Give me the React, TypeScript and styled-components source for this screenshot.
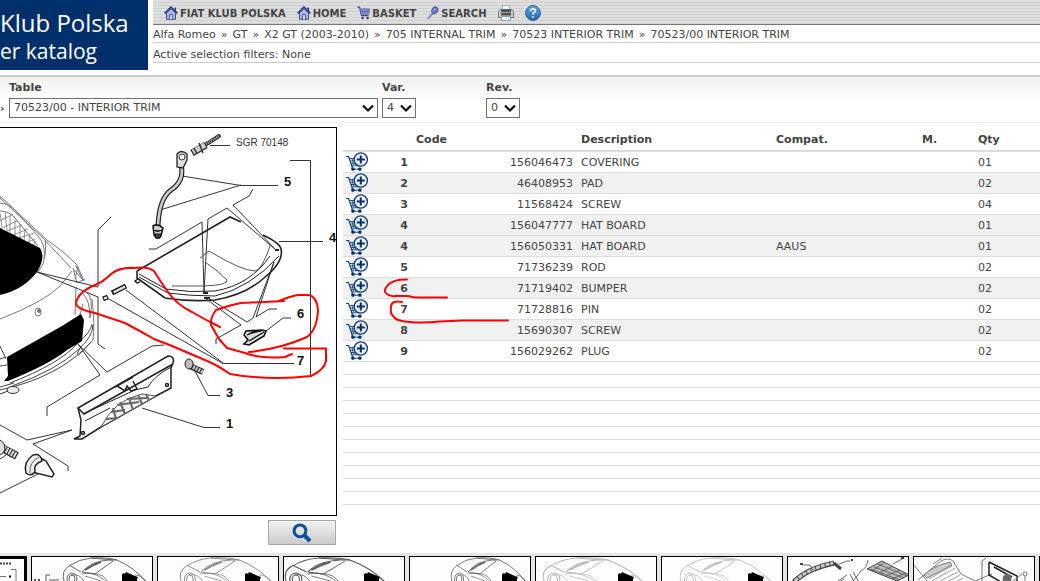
import React from "react";
import styled, { createGlobalStyle } from "styled-components";

const GlobalStyle = createGlobalStyle`
  * { box-sizing: border-box; }
  body {
    margin: 0;
    background: #fff;
    color: #444;
    font: 11px/14px Verdana, "DejaVu Sans", sans-serif;
  }
`;

const Page = styled.div`
  display: flex;
  flex-direction: column;
  height: 100vh;
  overflow: hidden;
`;

const Header = styled.header`
  display: flex;
  gap: 5px;
  flex: none;
  height: 75px;
`;

const Logo = styled.div`
  flex: none;
  width: 148px;
  height: 70px;
  padding-top: 8px;
  overflow: hidden;
  background: #00306b;
  color: #fff;
  font: 24px/29px "Open Sans", "Noto Sans", sans-serif;
  white-space: nowrap;
`;

const LogoSub = styled.div`
  font-size: 21px;
  line-height: 28px;
`;

const HeaderMain = styled.div`
  flex: 1;
  min-width: 0;
`;

const Menu = styled.nav`
  display: flex;
  align-items: center;
  gap: 11px;
  height: 25px;
  padding: 1px 0 0 11px;
  border-bottom: 1px solid #777;
  background: repeating-linear-gradient(#dedede 0 2px, #d0d0d0 2px 3px);
`;

const MenuLink = styled.a`
  display: flex;
  align-items: center;
  gap: 2px;
  color: #444;
  font-size: 10px;
  font-weight: bold;
  text-decoration: none;
  white-space: nowrap;

  svg { flex: none; display: block; }
`;

const MenuText = styled.span`
  padding-top: 2px;
`;

const InfoLine = styled.div<{ $tall?: boolean }>`
  display: flex;
  align-items: center;
  gap: 5px;
  height: ${(p) => (p.$tall ? 20 : 18)}px;
  padding-top: ${(p) => (p.$tall ? 4 : 2)}px;
  border-bottom: 1px solid #ccc;
  white-space: nowrap;
`;

const Crumb = styled.a`
  color: #444;
  text-decoration: none;
`;

const Filters = styled.form`
  display: flex;
  flex: none;
  gap: 4px;
  height: 48px;
  border-top: 2px solid #ccc;
  border-bottom: 1px solid #eee;
  background: linear-gradient(#f0f0f0, #fff 24px);
`;

const Arrow = styled.span`
  width: 5px;
  padding-top: 25px;
  overflow: hidden;
  font-weight: bold;
`;

const Field = styled.label<{ $width: number; $gap?: number }>`
  width: ${(p) => p.$width}px;
  margin-right: ${(p) => p.$gap ?? 0}px;
  padding-top: 4px;
  font-weight: bold;
`;

const SelectWrap = styled.span`
  position: relative;
  display: block;
  margin-top: 3px;

  svg {
    position: absolute;
    right: 4px;
    top: 6px;
    pointer-events: none;
  }
`;

const Select = styled.select`
  display: block;
  width: 100%;
  height: 20px;
  padding: 0 4px;
  border: 1px solid #707070;
  border-radius: 0;
  appearance: none;
  background: #fff;
  color: #444;
  font: 11px/18px Verdana, "DejaVu Sans", sans-serif;
`;

const Content = styled.main`
  display: flex;
  flex: none;
  gap: 6px;
  padding-top: 4px;
`;

const DrawingColumn = styled.section`
  display: flex;
  flex-direction: column;
  align-items: flex-end;
  gap: 4px;
  width: 337px;
  height: 426px;
`;

const DrawingFrame = styled.div`
  width: 100%;
  height: 389px;
  overflow: hidden;
  border: 1px solid #000;
  border-left: 0;

  svg { display: block; }
`;

const ZoomButton = styled.button`
  display: flex;
  align-items: center;
  justify-content: center;
  width: 68px;
  height: 25px;
  margin-right: 1px;
  padding: 0;
  border: 1px solid #aaa;
  background: linear-gradient(#f2f2f2, #cacaca);
`;

const PartsPanel = styled.section`
  position: relative;
  flex: 1;
  min-width: 0;
`;

const PartsTable = styled.table`
  width: 100%;
  border-collapse: separate;
  border-spacing: 0;
  table-layout: fixed;

  th {
    height: 25px;
    padding: 2px 3px 0;
    border-bottom: 2px solid #ddd;
    text-align: left;
  }
  td {
    height: 21px;
    padding: 2px 3px 0;
    border-bottom: 1px solid #ddd;
  }
`;

const PartRow = styled.tr<{ $shaded: boolean }>`
  background: ${(p) => (p.$shaded ? "#f1f1f1" : "#fff")};
`;

const NumberCell = styled.td`
  font-weight: bold;
  text-align: center;
`;

const CodeCell = styled.td`
  && { padding-right: 5px; }
  text-align: right;
`;

const IconCell = styled.td`
  && { padding-top: 0; }
`;

const AddButton = styled.button`
  display: block;
  padding: 0;
  border: 0;
  background: none;

  svg { display: block; }
`;

const Ruled = styled.div`
  height: 143px;
  background: repeating-linear-gradient(#fff 0 12px, #ddd 12px 13px);
`;

const Marks = styled.svg`
  position: absolute;
  left: 40px;
  top: 148px;
  pointer-events: none;
`;

const Strip = styled.footer`
  display: flex;
  flex: 1;
  gap: 4px;
  min-height: 0;
  padding-top: 3px;
  overflow: hidden;
  background: #e6e6e6;
`;

const Thumb = styled.a<{ $current?: boolean }>`
  flex: none;
  width: ${(p) => (p.$current ? 27 : 122)}px;
  height: 84px;
  overflow: hidden;
  border: ${(p) => (p.$current ? 3 : 1)}px solid #000;
  border-left-width: ${(p) => (p.$current ? 0 : 1)}px;
  background: #fcfffc;

  svg { display: block; }
`;

const HomeIcon = () => (
  <svg width="14" height="14" viewBox="0 0 14 14">
    <path d="M2.5 7v6.3h9V7L7 2.6z" fill="#aab8e6" stroke="#3c4f93" />
    <path d="M10.3 1.5h1.8v4h-1.8z" fill="#34488c" />
    <path d="M.7 7.4L7 1.2l6.3 6.2" fill="none" stroke="#2b3f86" strokeWidth="1.8" />
    <path d="M5.6 13V8.6h2.8V13" fill="#eef2ff" stroke="#3c4f93" />
  </svg>
);

const BasketIcon = () => (
  <svg width="13" height="14" viewBox="0 0 13 14">
    <path d="M.3 1.2h2.2L4.6 9.6h7" fill="none" stroke="#3b4a8c" strokeWidth="1.2" />
    <path d="M3 3h9.5l-.8 5H4.2z" fill="#a9b4e0" stroke="#5366ab" />
    <path d="M5.6 3l.5 5M8 3v5m2.3-5l-.4 5M3.500 5.400h8.600" stroke="#5366ab" strokeWidth=".9" />
    <circle cx="5.600" cy="12" r="1.300" fill="#2e3b75" />
    <circle cx="10.600" cy="12" r="1.300" fill="#2e3b75" />
  </svg>
);

const SearchIcon = () => (
  <svg width="12" height="14" viewBox="0 0 12 14">
    <path d="M6 7L1.300 12.300" stroke="#7e90d0" strokeWidth="2" strokeLinecap="round" />
    <ellipse cx="7.800" cy="4.400" rx="2.800" ry="3.500" transform="rotate(35 7.800 4.400)" fill="#6f80bd" stroke="#4d5f9f" strokeWidth="1.200" />
    <path d="M6.400 4.400q.7-2 2-1.700" fill="none" stroke="#aab8ea" />
  </svg>
);

const PrinterIcon = () => (
  <svg width="16" height="16" viewBox="0 0 16 16">
    <path d="M4.500 .5h7v5h-7z" fill="#f5fbff" stroke="#8fb4cc" />
    <path d="M2 4.500h12l1.500 2v6h-15v-6z" fill="#c9c9c9" stroke="#777" />
    <path d="M3 4.500h10v6H3z" fill="#555" />
    <path d="M3 7.500h10" stroke="#999" />
    <path d="M3.500 11.500h9v4h-9z" fill="#f5fbff" stroke="#8aa4b5" />
  </svg>
);

const HelpIcon = () => (
  <svg width="16" height="16" viewBox="0 0 16 16">
    <defs>
      <linearGradient id="help" x2="0" y2="1">
        <stop stopColor="#6ba4e6" />
        <stop offset="1" stopColor="#1b62bb" />
      </linearGradient>
    </defs>
    <circle cx="8" cy="8" r="7.400" fill="url(#help)" stroke="#2560a8" />
    <path d="M5.700 6.200q0-2.400 2.400-2.400t2.300 2q0 1-1.200 1.700T8 9.400" fill="none" stroke="#fff" strokeWidth="1.600" />
    <circle cx="8" cy="11.800" r="1" fill="#fff" />
  </svg>
);

const Chevron = () => (
  <svg width="12" height="9" viewBox="0 0 12 9">
    <path d="M1 1.500l5 5 5-5" fill="none" stroke="#111" strokeWidth="2.200" />
  </svg>
);

const CartPlusIcon = () => (
  <svg width="23" height="20" viewBox="0 0 23 20">
    <g fill="none" stroke="#12407c">
      <path d="M0 4.500h2.600L6.500 16" strokeWidth="1.200" />
      <path d="M3.500 6.500H9M4.300 9h5M5 11.500h6M5.800 13.800h8.800M6 6.500l1.600 7M8.500 6.500l1.400 7M12 12v2" strokeWidth=".9" />
    </g>
    <circle cx="14.800" cy="7.500" r="6.600" fill="#eceef1" stroke="#12407c" strokeWidth="1.400" />
    <path d="M14.800 3.500v8M10.800 7.500h8" stroke="#00306b" strokeWidth="2" />
    <path d="M7 17.200h7" stroke="#12407c" />
    <rect x="5.300" y="15.600" width="3.200" height="3.200" rx="1" fill="#00306b" />
    <rect x="12.300" y="15.600" width="3.200" height="3.200" rx="1" fill="#00306b" />
  </svg>
);

const MagnifierIcon = () => (
  <svg width="20" height="20" viewBox="0 0 20 20">
    <circle cx="8" cy="7.800" r="5.900" fill="none" stroke="#0b4f94" strokeWidth="3" />
    <path d="M12 12l6 6" stroke="#0b4f94" strokeWidth="4" />
  </svg>
);

const TrimDrawing = () => (
  <svg width="336" height="387" viewBox="0 128 336 387" role="img" aria-label="Interior trim drawing">
    {/* car body */}
    <g fill="none" stroke="#777">
      <path d="M0 196L47 240Q64 251 77 265L84 281M0 198L43 238L71 268M0 203Q8 203 14 209L38 236Q46 245 44 259M45 240Q47 250 43 264L38 272M0 211Q9 211 15 218L38 246" />
      <path d="M0 213l2 14M5 212l2 19M10 216l0 18M15 220l0 17M20 224l0 17M25 229l-1 14M30 235l-2 12M35 241l-2 8M0 221l13-7M0 229l17-8M7 231l15-6M13 235l15-6M19 238l15-5M26 243l9-4" strokeWidth=".8" />
      <path d="M0 319Q44 302 60 286L72 271M73 268L77 283L85 279M76 266L83 281M74 270l9 10M78 267l-3 12" />
      <path d="M76 287L75 315M83 294Q90 300 90 318Q94 296 86 292M83 304L79 318M92 299Q95 325 93 340L78 356" />
      <ellipse cx="38" cy="312" rx="3" ry="4" />
      <circle cx="39" cy="311" r="1.500" fill="#777" />
      <path d="M0 346L6 359M0 359L6 357M0 366L7 365M10 383Q59 364 77 344Q91 332 92 324M12 386Q57 370 79 349Q93 336 93 325M0 390Q60 377 91 342M0 387L14 383M77 354l3-6" stroke="#444" />
    </g>
    <path d="M0 228L40 248Q46 257 37 272Q23 290 0 295z" />
    <path d="M7 357L62 326L81 314L84 320L82 341L67 350Q50 364 8 381L4 381L8 376z" />
    <ellipse cx="13" cy="390" rx="6" ry="3.500" fill="#eee" stroke="#333" />
    <path d="M0 394L8 391" stroke="#333" />

    {/* leader lines */}
    <g fill="none" stroke="#333">
      <path d="M111 217L98 230V287L37 272L98 297V344L105 349" />
      <path d="M78 344L107 372L152 346L164 345M78 344L100 375L47 407V416" />
      <path d="M0 425L27 440L72 430L33 444L68 466V471M0 493L38 474M0 459l6-4" />
      <path d="M210 145.500H230M182 176L241 185.500H278M241 185L160 210M290 160.500H310.500V376M279 241.500H323" />
      <path d="M149 249H156L202 222L204 292L208 219L227 208L276 250L233 205L249 196L253 189" />
      <path d="M109 299L223 363.500H294M126 290L223 363" />
      <path d="M205 298L241 325L216 339V344M208 298L247 322L253 318L274 262L256 317L269 309H277M266 331L283 318H291M195 371L208 395.500H220M142 408L204 427.500H220" />
    </g>

    {/* gas strut and pin */}
    <path d="M181 164Q185 181 171 190Q159 199 158 226" fill="none" stroke="#222" strokeWidth="5" />
    <path d="M181 164Q185 181 171 190Q159 199 158 226" fill="none" stroke="#ccc" strokeWidth="2.600" />
    <path d="M177 167V154Q181 149 187 154V160L183 168z" fill="#ddd" stroke="#222" strokeWidth="1.300" />
    <circle cx="182" cy="157" r="3" fill="#fff" stroke="#333" />
    <path d="M153 226Q158 223 163 228L161 236Q157 241 154 235z" fill="#ccc" stroke="#111" strokeWidth="1.500" />
    <path d="M153 230q5 3 9 0M155 234h6l-1 4h-4z" fill="#444" stroke="#111" />
    <path d="M192 153L206 145" stroke="#333" strokeWidth="7" />
    <path d="M205 145L219 136" stroke="#333" strokeWidth="4" strokeLinecap="round" />
    <path d="M193 152L205 145" stroke="#ccc" strokeWidth="5" />
    <path d="M206 144L219 136" stroke="#aaa" strokeWidth="2.500" strokeDasharray="1 1" />
    <path d="M199 143l4 10M194 148l3 6" stroke="#333" strokeWidth="1.500" />

    {/* parcel shelf */}
    <g fill="none" stroke="#222">
      <path d="M137 271L230 217L241 222M137 271V278L165 298Q190 302 215 300Q245 295 264 278Q284 262 281 249Q280 243 263 235" strokeWidth="1.600" />
      <path d="M139 274L166 289Q190 293 215 291Q250 285 270 256M139 277L168 293Q190 296 215 296Q250 288 279 256" />
      <path d="M138 279l-3 2 2 2 3-1" strokeWidth="1.500" />
      <path d="M200 258L209 251Q242 271 255 271Q262 270 270 246M205 262Q216 269 227 280Q229 285 204 286H172" stroke="#555" />
      <path d="M203 293h5M204 298h6M275 250h4" strokeWidth="2" />
    </g>

    {/* pins and bumper */}
    <path d="M112 293L126 286M103 299L108 297" stroke="#111" strokeWidth="5" />
    <path d="M113.500 292.300L125 286.600M104 298.600L107 297.400" stroke="#ddd" strokeWidth="2.500" />
    <path d="M244 335L246 331L262 330L266 331L264 336L249 345L244 344L248 340z" fill="#ddd" stroke="#111" strokeWidth="1.600" />
    <path d="M249 341L264 332M247 335L253 332L261 331" stroke="#111" strokeWidth="1.300" />

    {/* screws and plug */}
    <path d="M190 366L203 372" stroke="#222" strokeWidth="6" />
    <path d="M193 367L203 372" stroke="#ccc" strokeWidth="4" strokeDasharray="2 1" />
    <ellipse cx="189" cy="364" rx="4" ry="5" fill="#bbb" stroke="#222" />
    <path d="M0 447L17 456" stroke="#222" strokeWidth="8" />
    <path d="M1 447L17 456" stroke="#ddd" strokeWidth="6" strokeDasharray="2 1" />
    <path d="M0 440Q7 444 4 452L0 455" fill="#ddd" stroke="#222" />
    <path d="M39 457L46 461L54 474L52 477L32 472z" fill="#fff" stroke="#222" strokeWidth="1.500" />
    <path d="M42 461Q41 453 33 455Q23 462 26 473Q31 477 35 472Q33 464 42 461z" fill="#eee" stroke="#222" strokeWidth="1.500" />
    <path d="M39 457Q29 462 30 473" fill="none" stroke="#666" />

    {/* lower panel */}
    <g fill="none" stroke="#222" strokeWidth="1.500">
      <path d="M78 408L168 356Q175 356 173 363L171 368V388L156 396L101 427L82 439H74L80 436L81 420z" fill="#fff" />
      <path d="M78 408L84 414L173 364M117 386L125 391L127 386L131 391L137 389L133 381M115 387L133 377" />
      <path d="M83 414L135 390L148 387Q154 376 171 367M85 421L110 408" strokeWidth="1" />
      <path d="M101 427Q114 400 142 394L156 396z" fill="#f4f4f4" strokeWidth="1" stroke="#555" />
      <path d="M106 419l12 -1M111 412l14 -2M117 405l22-3M127 399l20-1M113 408l3 11M120 402l5 12M129 398l4 12M138 395l4 9M146 394l3 6" strokeWidth="2" stroke="#666" />
      <circle cx="167" cy="385" r="1.500" />
      <circle cx="83" cy="433" r="1.500" />
    </g>

    <g fill="#111" fontFamily="Liberation Sans, Arial, sans-serif">
      <text x="236" y="146" fontSize="10" fill="#333">SGR 70148</text>
      <g fontSize="13" fontWeight="bold">
        <text x="284" y="186">5</text>
        <text x="329" y="242">4</text>
        <text x="297" y="318">6</text>
        <text x="297" y="365">7</text>
        <text x="226" y="397">3</text>
        <text x="226" y="428">1</text>
      </g>
    </g>

    {/* red pen marks */}
    <g fill="none" stroke="#f00" strokeWidth="2" strokeLinecap="round" strokeLinejoin="round">
      <path d="M326 348.500H284M326 349V361Q324 370 311 376Q270 381 230 374Q219 366 205 360L172 346L154 339Q140 331 125 323L95 313Q76 309 76 303Q78 292 95 285Q103 282 111 274Q120 267 134 268Q148 266 154 271Q160 281 168 292Q177 305 192 312L210 322L220 327" />
      <path d="M284 301L241 303Q230 305 216 310Q210 318 211 325L219 339L227 348L245 353Q260 359 285 357L292 354" />
      <path d="M249 352Q280 349 307 337Q317 330 318 310Q317 297 309 295H298Q291 296 279 301" />
    </g>
  </svg>
);

type CarProps = { x: number; scale?: number; opacity?: number; tail: number; label?: boolean };

const CarDrawing = ({ x, scale = 1, opacity = 1, tail, label }: CarProps) => (
  <svg width="120" height="82" viewBox="0 0 120 82">
    <g transform={`translate(${x} 0) scale(${scale} 1)`} fill="none" stroke="#555" opacity={opacity} strokeWidth=".9">
      <path d="M1 24Q-2 14 6 9Q16 2 28 1Q44 0 54 3Q72 11 82 24" />
      <path d="M19 15Q28 4 46 3L54 3M19 15L32 17L50 4M6 8L18 15M28 1L50 3" />
      <path d="M18 17Q32 15 40 19L46 26M22 19L38 24M26 16Q38 18 44 26M8 18Q17 16 21 25M72 18Q80 18 86 28" strokeWidth=".7" />
      <ellipse cx="9" cy="22" rx="5" ry="6" />
      <ellipse cx="9" cy="22" rx="3" ry="4" />
      <path d="M22 13L34 6M31 8l7-3" strokeWidth="1.800" />
    </g>
    <path d={`M${tail} 17l2-1 1 1 1-2 9 4 3 1-1 2v6h-15z`} />
    {label && (
      <g stroke="#555" fill="none">
        <path d="M14 25V18H18M17 23H27" />
        <path d="M2 23h6" strokeDasharray="2 2" strokeWidth="2" />
      </g>
    )}
  </svg>
);

const SheetDrawing = () => (
  <svg width="27" height="82" viewBox="0 0 27 82" fill="none" stroke="#777">
    <path d="M0 4.500H11" stroke="#444" strokeWidth="2" strokeDasharray="2 1" />
    <path d="M11 10.500H16V40M0 17.500H6" />
    <path d="M9 17.500h2" stroke="#000" strokeWidth="2" />
  </svg>
);

const StripDrawing = () => (
  <svg width="120" height="82" viewBox="0 0 120 82" fill="none" stroke="#444">
    <path d="M6 25Q18 12 46 6" strokeWidth="5" />
    <path d="M7 24Q19 12 45 6" stroke="#ccc" strokeWidth="3" strokeDasharray="4 1" />
    <path d="M46 6L53 12" strokeWidth="3" />
    <path d="M15 8H22L25 13M51 7L59 4H62M80 3Q79 11 73 14L62 28M62 17L70 32M65 15L74 30M50 24L59 18M48 27L56 22M96 24L100 27" strokeWidth=".8" />
    <path d="M79 12L94 4L121 18L109 24z" fill="#bbb" />
    <path d="M82 12L112 23M86 10L116 21M90 7L119 19M84 14L97 5M91 16L105 9M98 19L112 13M104 22L118 16" strokeWidth=".7" />
    <path d="M105 7L114 2" strokeWidth=".8" />
    <path d="M12 7h3M63 3h2M113 1h3" strokeWidth="2" />
  </svg>
);

const GrilleDrawing = () => (
  <svg width="120" height="82" viewBox="0 0 120 82" fill="none" stroke="#777">
    <path d="M0 8L18 30M4 23L27 4Q34 0 39 4L47 17L61 24L78 17M68 25V4L72 1M19 7L28 1" />
    <path d="M15 22L38 9M16 25L41 11M18 28L44 15M27 28L46 18M33 30L49 21" strokeWidth=".7" />
    <path d="M10 18Q19 9 36 5L38 8L13 21z" fill="#ccc" />
    <path d="M75 5L103 19V30M75 5V18L92 28M80 10L98 20" stroke="#222" strokeWidth="1.500" />
    <ellipse cx="93" cy="22" rx="4" ry="5" fill="#666" />
    <circle cx="111" cy="17" r="2" />
    <path d="M99 24L108 17M111 19V26" />
  </svg>
);

const crumbs = ["Alfa Romeo", "GT", "X2 GT (2003-2010)", "705 INTERNAL TRIM", "70523 INTERIOR TRIM", "70523/00 INTERIOR TRIM"];

const parts = [
  { no: "1", code: "156046473", name: "COVERING", compat: "", qty: "01", shaded: false },
  { no: "2", code: "46408953", name: "PAD", compat: "", qty: "02", shaded: true },
  { no: "3", code: "11568424", name: "SCREW", compat: "", qty: "04", shaded: false },
  { no: "4", code: "156047777", name: "HAT BOARD", compat: "", qty: "01", shaded: true },
  { no: "4", code: "156050331", name: "HAT BOARD", compat: "AAUS", qty: "01", shaded: true },
  { no: "5", code: "71736239", name: "ROD", compat: "", qty: "02", shaded: false },
  { no: "6", code: "71719402", name: "BUMPER", compat: "", qty: "02", shaded: true },
  { no: "7", code: "71728816", name: "PIN", compat: "", qty: "02", shaded: false },
  { no: "8", code: "15690307", name: "SCREW", compat: "", qty: "02", shaded: true },
  { no: "9", code: "156029262", name: "PLUG", compat: "", qty: "02", shaded: false },
];

const Picker = ({ id, label, value, width, gap }: { id: string; label: string; value: string; width: number; gap?: number }) => (
  <Field htmlFor={id} $width={width} $gap={gap}>
    {label}
    <SelectWrap>
      <Select id={id} defaultValue={value}>
        <option>{value}</option>
      </Select>
      <Chevron />
    </SelectWrap>
  </Field>
);

export default function App() {
  return (
    <Page>
      <GlobalStyle />
      <Header>
        <Logo>
          Klub Polska
          <LogoSub>er katalog</LogoSub>
        </Logo>
        <HeaderMain>
          <Menu>
            <MenuLink href="#club"><HomeIcon /><MenuText>FIAT KLUB POLSKA</MenuText></MenuLink>
            <MenuLink href="#home"><HomeIcon /><MenuText>HOME</MenuText></MenuLink>
            <MenuLink href="#basket"><BasketIcon /><MenuText>BASKET</MenuText></MenuLink>
            <MenuLink href="#search"><SearchIcon /><MenuText>SEARCH</MenuText></MenuLink>
            <MenuLink href="#print" aria-label="Print"><PrinterIcon /></MenuLink>
            <MenuLink href="#help" aria-label="Help"><HelpIcon /></MenuLink>
          </Menu>
          <InfoLine>
            {crumbs.map((crumb, i) => (
              <React.Fragment key={crumb}>
                {i > 0 && <span>»</span>}
                <Crumb href="#crumb">{crumb}</Crumb>
              </React.Fragment>
            ))}
          </InfoLine>
          <InfoLine $tall>Active selection filters: None</InfoLine>
        </HeaderMain>
      </Header>

      <Filters>
        <Arrow>›</Arrow>
        <Picker id="table" label="Table" value="70523/00 - INTERIOR TRIM" width={369} />
        <Picker id="variant" label="Var." value="4" width={34} gap={66} />
        <Picker id="revision" label="Rev." value="0" width={34} />
      </Filters>

      <Content>
        <DrawingColumn>
          <DrawingFrame><TrimDrawing /></DrawingFrame>
          <ZoomButton type="button" aria-label="Zoom"><MagnifierIcon /></ZoomButton>
        </DrawingColumn>
        <PartsPanel>
          <PartsTable>
            <colgroup>
              <col width="52" />
              <col width="18" />
              <col width="165" />
              <col width="195" />
              <col width="146" />
              <col width="56" />
              <col />
            </colgroup>
            <thead>
              <tr>
                <th />
                <th />
                <th>Code</th>
                <th>Description</th>
                <th>Compat.</th>
                <th>M.</th>
                <th>Qty</th>
              </tr>
            </thead>
            <tbody>
              {parts.map((part) => (
                <PartRow key={part.code} $shaded={part.shaded}>
                  <IconCell><AddButton type="button" aria-label={`Add ${part.code}`}><CartPlusIcon /></AddButton></IconCell>
                  <NumberCell>{part.no}</NumberCell>
                  <CodeCell>{part.code}</CodeCell>
                  <td>{part.name}</td>
                  <td>{part.compat}</td>
                  <td />
                  <td>{part.qty}</td>
                </PartRow>
              ))}
            </tbody>
          </PartsTable>
          <Ruled />
          <Marks width="130" height="52" viewBox="383 275 130 52" fill="none" stroke="#f00" strokeWidth="2" strokeLinecap="round">
            <path d="M407 279.500Q395 279 389 284Q384 289 385 292Q389 297 396 296H408Q415 298 421 297.500H447" />
            <path d="M402 302Q392 300 391 306Q390 314 393 316Q396 320 400 320.500Q415 324 440 321.500L462 320.500H508" />
          </Marks>
        </PartsPanel>
      </Content>

      <Strip>
        <Thumb href="#t0" $current aria-label="Sheet 1"><SheetDrawing /></Thumb>
        <Thumb href="#t1" aria-label="Sheet 2"><CarDrawing x={31} tail={90} label /></Thumb>
        <Thumb href="#t2" aria-label="Sheet 3"><CarDrawing x={22} scale={1.1} opacity={0.7} tail={87} /></Thumb>
        <Thumb href="#t3" aria-label="Sheet 4"><CarDrawing x={1} scale={1.2} tail={80} /></Thumb>
        <Thumb href="#t4" aria-label="Sheet 5"><CarDrawing x={41} scale={0.9} opacity={0.9} tail={92} /></Thumb>
        <Thumb href="#t5" aria-label="Sheet 6"><CarDrawing x={7} scale={1.2} opacity={0.4} tail={82} /></Thumb>
        <Thumb href="#t6" aria-label="Sheet 7"><CarDrawing x={18} scale={1.1} opacity={0.35} tail={86} /></Thumb>
        <Thumb href="#t7" aria-label="Sheet 8"><StripDrawing /></Thumb>
        <Thumb href="#t8" aria-label="Sheet 9"><GrilleDrawing /></Thumb>
        <Thumb href="#t9" aria-label="Sheet 10" />
      </Strip>
    </Page>
  );
}
